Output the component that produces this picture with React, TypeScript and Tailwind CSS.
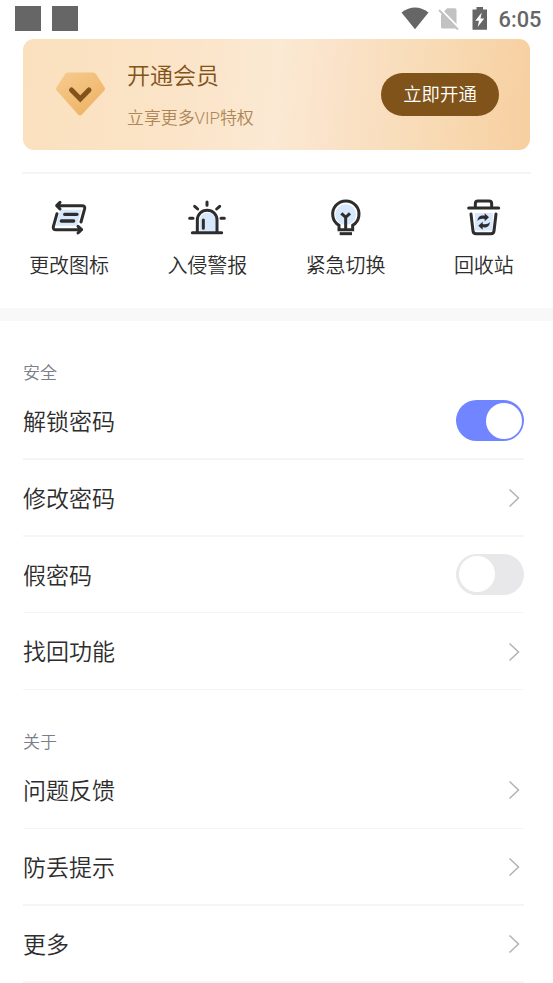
import type { ReactNode } from 'react';

const ink = '#2d2d2d';
const tint = '#d8e8fc';

function ChangeIcon() {
  return (
    <svg className="size-10" viewBox="0 0 120 120" fill="none" stroke={ink} strokeWidth="9" strokeLinecap="round" strokeLinejoin="round">
      <path d="M34 35H97L85 83H21Z" fill={tint} stroke="none" />
      <path d="M24 23H99Q109 23 107 32L96 72M33 13L23 23L33 33" />
      <path d="M97 95H21Q11 95 13 86L24 47M87 85L98 95L87 105" />
      <path d="M47 49H84M37 69H74" strokeWidth="10" />
    </svg>
  );
}

function AlarmIcon() {
  return (
    <svg className="size-10" viewBox="0 0 120 120" fill="none" stroke={ink} strokeWidth="9" strokeLinecap="round">
      <path d="M38 100V68A24 24 0 0 1 86 68V100Z" fill={tint} stroke="none" />
      <path d="M31 103V66A29.500 29.500 0 0 1 90 66V103M16 104H104" />
      <path d="M49 66V91M60 12V22M23 25L32 33M98 25L89 33M8 61H18M102 61H112" />
    </svg>
  );
}

function BulbIcon() {
  return (
    <svg className="size-10" viewBox="0 0 120 120" fill="none" stroke={ink} strokeWidth="9">
      <circle cx="59" cy="50" r="31" fill={tint} stroke="none" />
      <path d="M39 95V82A39.500 39.500 0 1 1 80 82V95Z" />
      <path d="M46 46L59 58L72 46M59 58V94" />
      <path d="M41 107H78" />
    </svg>
  );
}

function RecycleIcon() {
  return (
    <svg className="size-10" viewBox="0 0 120 120" fill="none" stroke={ink} strokeWidth="9" strokeLinecap="round" strokeLinejoin="round">
      <path d="M33 45H86V98H33Z" fill={tint} stroke="none" />
      <path d="M14 30H104M34 28V17Q34 9 42 9H75Q83 9 83 17V28" />
      <path d="M21 48L27 99Q28 107 36 107H81Q89 107 90 99L96 48" />
      <g fill={ink} stroke="none">
        <path d="M40 69C42 55 50 51 62 53V46L75 58L62 70V63C52 61 46 63 40 69Z" />
        <path d="M78 72C76 86 68 90 56 88V95L43 83L56 71V78C66 80 72 78 78 72Z" />
      </g>
    </svg>
  );
}

function Shortcut({ icon, label }: { icon: ReactNode; label: string }) {
  return (
    <div className="flex flex-col items-center">
      {icon}
      <span className="mt-3 text-[20px] leading-[30px] whitespace-nowrap">{label}</span>
    </div>
  );
}

function Chevron() {
  return (
    <svg className="mt-px mr-1 h-5 w-3" viewBox="0 0 12 20" fill="none" stroke="#b2b2b2" strokeWidth="1.500">
      <path d="M1.500 1.500L10.500 10L1.500 18.500" />
    </svg>
  );
}

function Toggle({ on }: { on: boolean }) {
  return (
    <div className={`flex h-[41px] w-[68px] items-center rounded-full px-[2.500px] ${on ? 'justify-end bg-[#7085ff]' : 'justify-start bg-[#e8e8ea]'}`}>
      <div className="size-9 rounded-full bg-white" />
    </div>
  );
}

function Row({ label, children }: { label: string; children: ReactNode }) {
  return (
    <div className="flex h-[76.800px] flex-col">
      <div className="flex flex-1 items-center justify-between">
        <span className="pb-[1.500px] text-[23px] leading-[34px]">{label}</span>
        {children}
      </div>
      <div className="h-[1.500px] bg-[#f5f5f5]" />
    </div>
  );
}

function SectionTitle({ children }: { children: ReactNode }) {
  return <h2 className="flex h-[62px] items-end pb-[1.500px] text-[17px] leading-[20px] text-[#7b7e8a]">{children}</h2>;
}

function StatusBar() {
  return (
    <header className="flex h-[39px] items-start justify-between">
      <div className="flex gap-[11.500px] pt-[5.500px] pl-[15px]">
        <div className="size-[25.500px] bg-[#666]" />
        <div className="size-[25.500px] bg-[#666]" />
      </div>
      <div className="flex items-start pt-[6px] pr-[13px]">
        <svg className="mt-[1px] h-[23px] w-[28px]" viewBox="0 0 28 23" fill="#666">
          <path d="M0.500 5.500Q14 -4.500 27.500 5.500L14 22.300Z" />
        </svg>
        <svg className="mt-[1px] ml-[9px] h-[24px] w-[21px]" viewBox="0 0 21 24">
          <path d="M3 8L9 1.300H17Q18.500 1.300 18.500 3V21.500H4.500Q3 21.500 3 20Z" fill="#c2c2c2" />
          <path d="M2.600 2.300L21 21" stroke="#fff" strokeWidth="2" />
          <path d="M1 3L20 22.500" stroke="#c2c2c2" strokeWidth="1.800" />
        </svg>
        <svg className="mt-[1px] ml-[13px] h-[24px] w-[16px]" viewBox="0 0 16 24">
          <path d="M4.500 0H11V2.500H15V22.800H0.500V2.500H4.500Z" fill="#666" />
          <path d="M9.700 5.500L3.300 13.800H7L5.700 20L12.200 11.500H8.500Z" fill="#fff" />
        </svg>
        <span className="ml-[11px] w-[41.500px] font-['Roboto',sans-serif] text-[21.800px] leading-[27px] font-medium whitespace-nowrap text-[#666]">6:05</span>
      </div>
    </header>
  );
}

function MembershipCard() {
  return (
    <section className="mx-[23px] flex h-[110.500px] items-center rounded-[11px] bg-[linear-gradient(95deg,#fae0bd_0%,#fbe4c8_30%,#fbe9d3_50%,#fae2c8_62%,#f8dbb5_80%,#f7cfa0_100%)] pr-[31px] pl-[32px]">
      <svg className="h-[46px] w-[51px]" viewBox="0 0 51 46">
        <defs>
          <linearGradient id="gem" x1="0" y1="0" x2="0.700" y2="1">
            <stop stopColor="#f7cb8f" />
            <stop offset="1" stopColor="#eeb365" />
          </linearGradient>
        </defs>
        <path d="M13 1.500H38Q40 1.500 41 3L49.700 16.500Q50.500 18 49.500 19.300L27 43.500Q25 45.500 23 43.500L1.500 19.300Q0.500 18 1.500 16.500L10 3Q11 1.500 13 1.500Z" fill="url(#gem)" />
        <path d="M16.500 19L25.300 28L34 19" fill="none" stroke="#80531a" strokeWidth="5" strokeLinecap="round" />
      </svg>
      <div className="ml-[21px] flex-1">
        <h1 className="text-[23px] leading-[33px] text-[#80531a]">开通会员</h1>
        <p className="mt-[14px] -mb-px font-['Roboto','Noto_Sans_CJK_SC',sans-serif] text-[16.900px] leading-[26px] text-[#ad8656]">立享更多VIP特权</p>
      </div>
      <button className="h-[43px] w-[118px] rounded-full bg-[#80531a] text-[18.400px] text-white">立即开通</button>
    </section>
  );
}

export default function App() {
  return (
    <main className="h-[983px] w-[553px] overflow-hidden bg-white font-['Noto_Sans_CJK_SC',sans-serif] font-[350] text-[#2d2d2d]">
      <StatusBar />
      <MembershipCard />
      <div className="mx-[22px] mt-[22.500px] h-[2px] bg-[#f5f5f5]" />
      <nav className="grid h-[134px] grid-cols-4 pt-6">
        <Shortcut icon={<ChangeIcon />} label="更改图标" />
        <Shortcut icon={<AlarmIcon />} label="入侵警报" />
        <Shortcut icon={<BulbIcon />} label="紧急切换" />
        <Shortcut icon={<RecycleIcon />} label="回收站" />
      </nav>
      <div className="h-[12.500px] bg-[#f8f8f8]" />
      <div className="pt-[0.600px] pr-[29px] pl-[23px]">
        <SectionTitle>安全</SectionTitle>
        <Row label="解锁密码"><Toggle on /></Row>
        <Row label="修改密码"><Chevron /></Row>
        <Row label="假密码"><Toggle on={false} /></Row>
        <Row label="找回功能"><Chevron /></Row>
        <SectionTitle>关于</SectionTitle>
        <Row label="问题反馈"><Chevron /></Row>
        <Row label="防丢提示"><Chevron /></Row>
        <Row label="更多"><Chevron /></Row>
      </div>
    </main>
  );
}
